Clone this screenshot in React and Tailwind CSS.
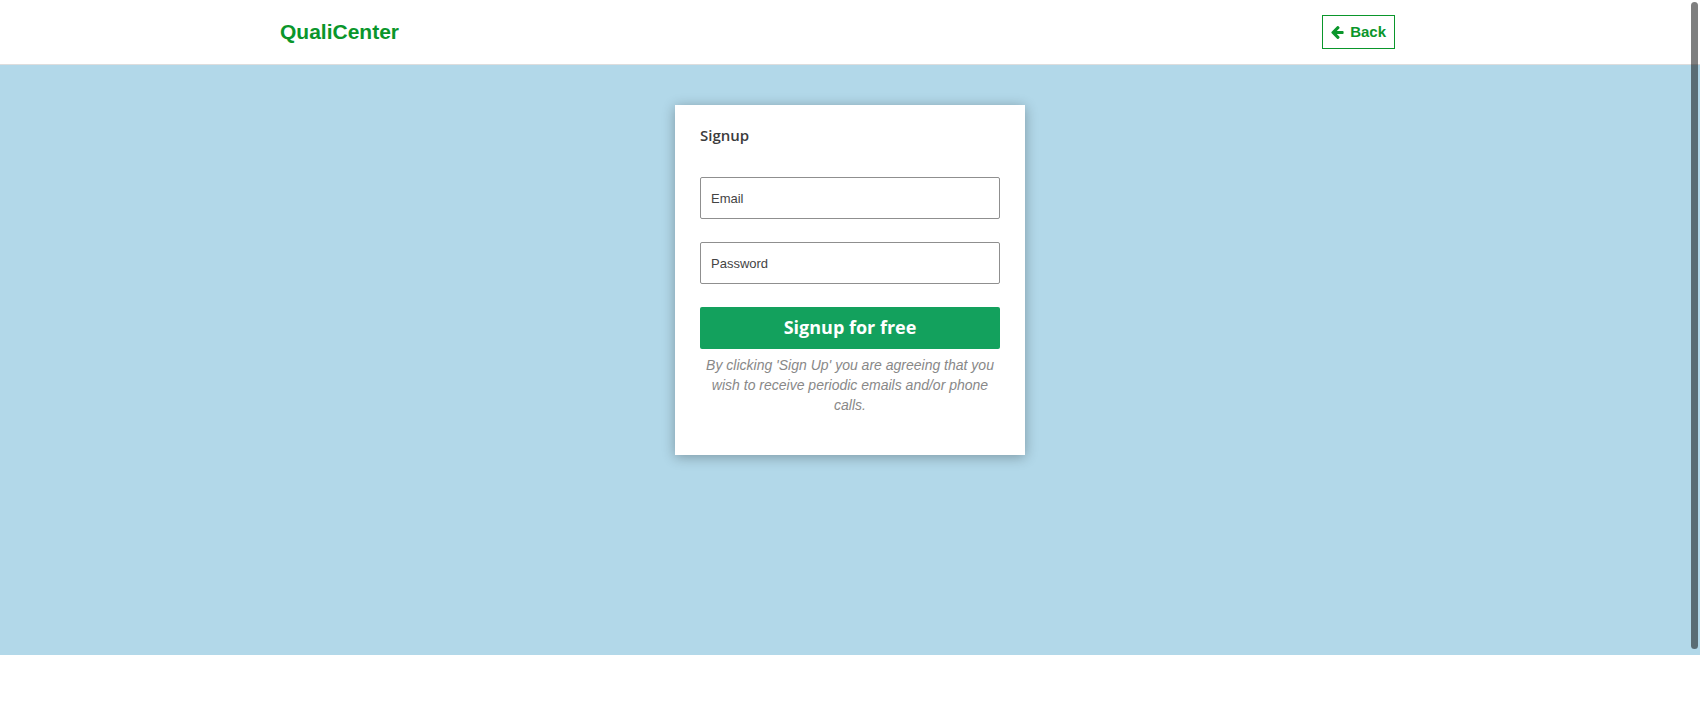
function ArrowLeft() {
  return (
    <svg viewBox="192 176 1472 1568" className="size-[13px]" fill="currentColor" aria-hidden="true">
      <path d="M1664 896v128q0 53-32.5 90.5t-84.5 37.5h-704l293 294q38 36 38 90t-38 90l-75 76q-37 37-90 37-52 0-91-37l-651-652q-37-37-37-90 0-52 37-91l651-650q38-38 91-38 52 0 90 38l75 74q38 38 38 91t-38 91l-293 293h704q52 0 84.5 37.5t32.5 90.5z" />
    </svg>
  );
}

function Field({ type, label }) {
  return (
    <input
      type={type}
      aria-label={label}
      placeholder={label}
      className="mb-[23px] block h-[42px] w-full rounded-xs border border-[#8f8f8f] bg-white px-[10px] text-[13px] text-[#444] placeholder:text-[#444]"
    />
  );
}

export default function App() {
  return (
    <div className="relative font-['Liberation_Sans',Arial,sans-serif]">
      <header className="border-b border-[#dddddd] bg-white">
        <div className="mx-auto flex h-16 max-w-[1170px] items-center justify-between pr-10 pl-[15px]">
          <a href="#" className="text-[21px] font-bold text-[#0a962b]">
            QualiCenter
          </a>
          <a
            href="#"
            className="flex h-[34px] items-center gap-[6px] border border-[#0a962b] px-2 text-[15px] font-bold text-[#0a962b]"
          >
            <ArrowLeft />
            Back
          </a>
        </div>
      </header>

      <main className="bg-[#b2d8e9] px-4 pt-10 pb-[200px]">
        <form
          className="mx-auto max-w-[350px] bg-white px-[25px] pt-[18px] pb-10 shadow-[0_2px_12px_rgba(0,0,0,0.3)]"
          onSubmit={(e) => e.preventDefault()}
        >
          <h1 className="mb-[30px] font-['Open_Sans',sans-serif] text-[15px] leading-6 font-semibold text-[#3c3c3c]">
            Signup
          </h1>
          <Field type="email" label="Email" />
          <Field type="password" label="Password" />
          <button
            type="submit"
            className="block h-[42px] w-full rounded-xs bg-[#13a15d] pb-[2px] font-['Open_Sans',sans-serif] text-[18px] font-bold text-white"
          >
            Signup for free
          </button>
          <p className="mt-[6px] text-center text-[14px] leading-5 text-[#888888] italic">
            By clicking 'Sign Up' you are agreeing that you wish to receive periodic emails and/or phone calls.
          </p>
        </form>
      </main>

      <div className="absolute top-[2px] right-[2px] bottom-[6px] w-[7px] rounded-full bg-black/50" />
    </div>
  );
}
